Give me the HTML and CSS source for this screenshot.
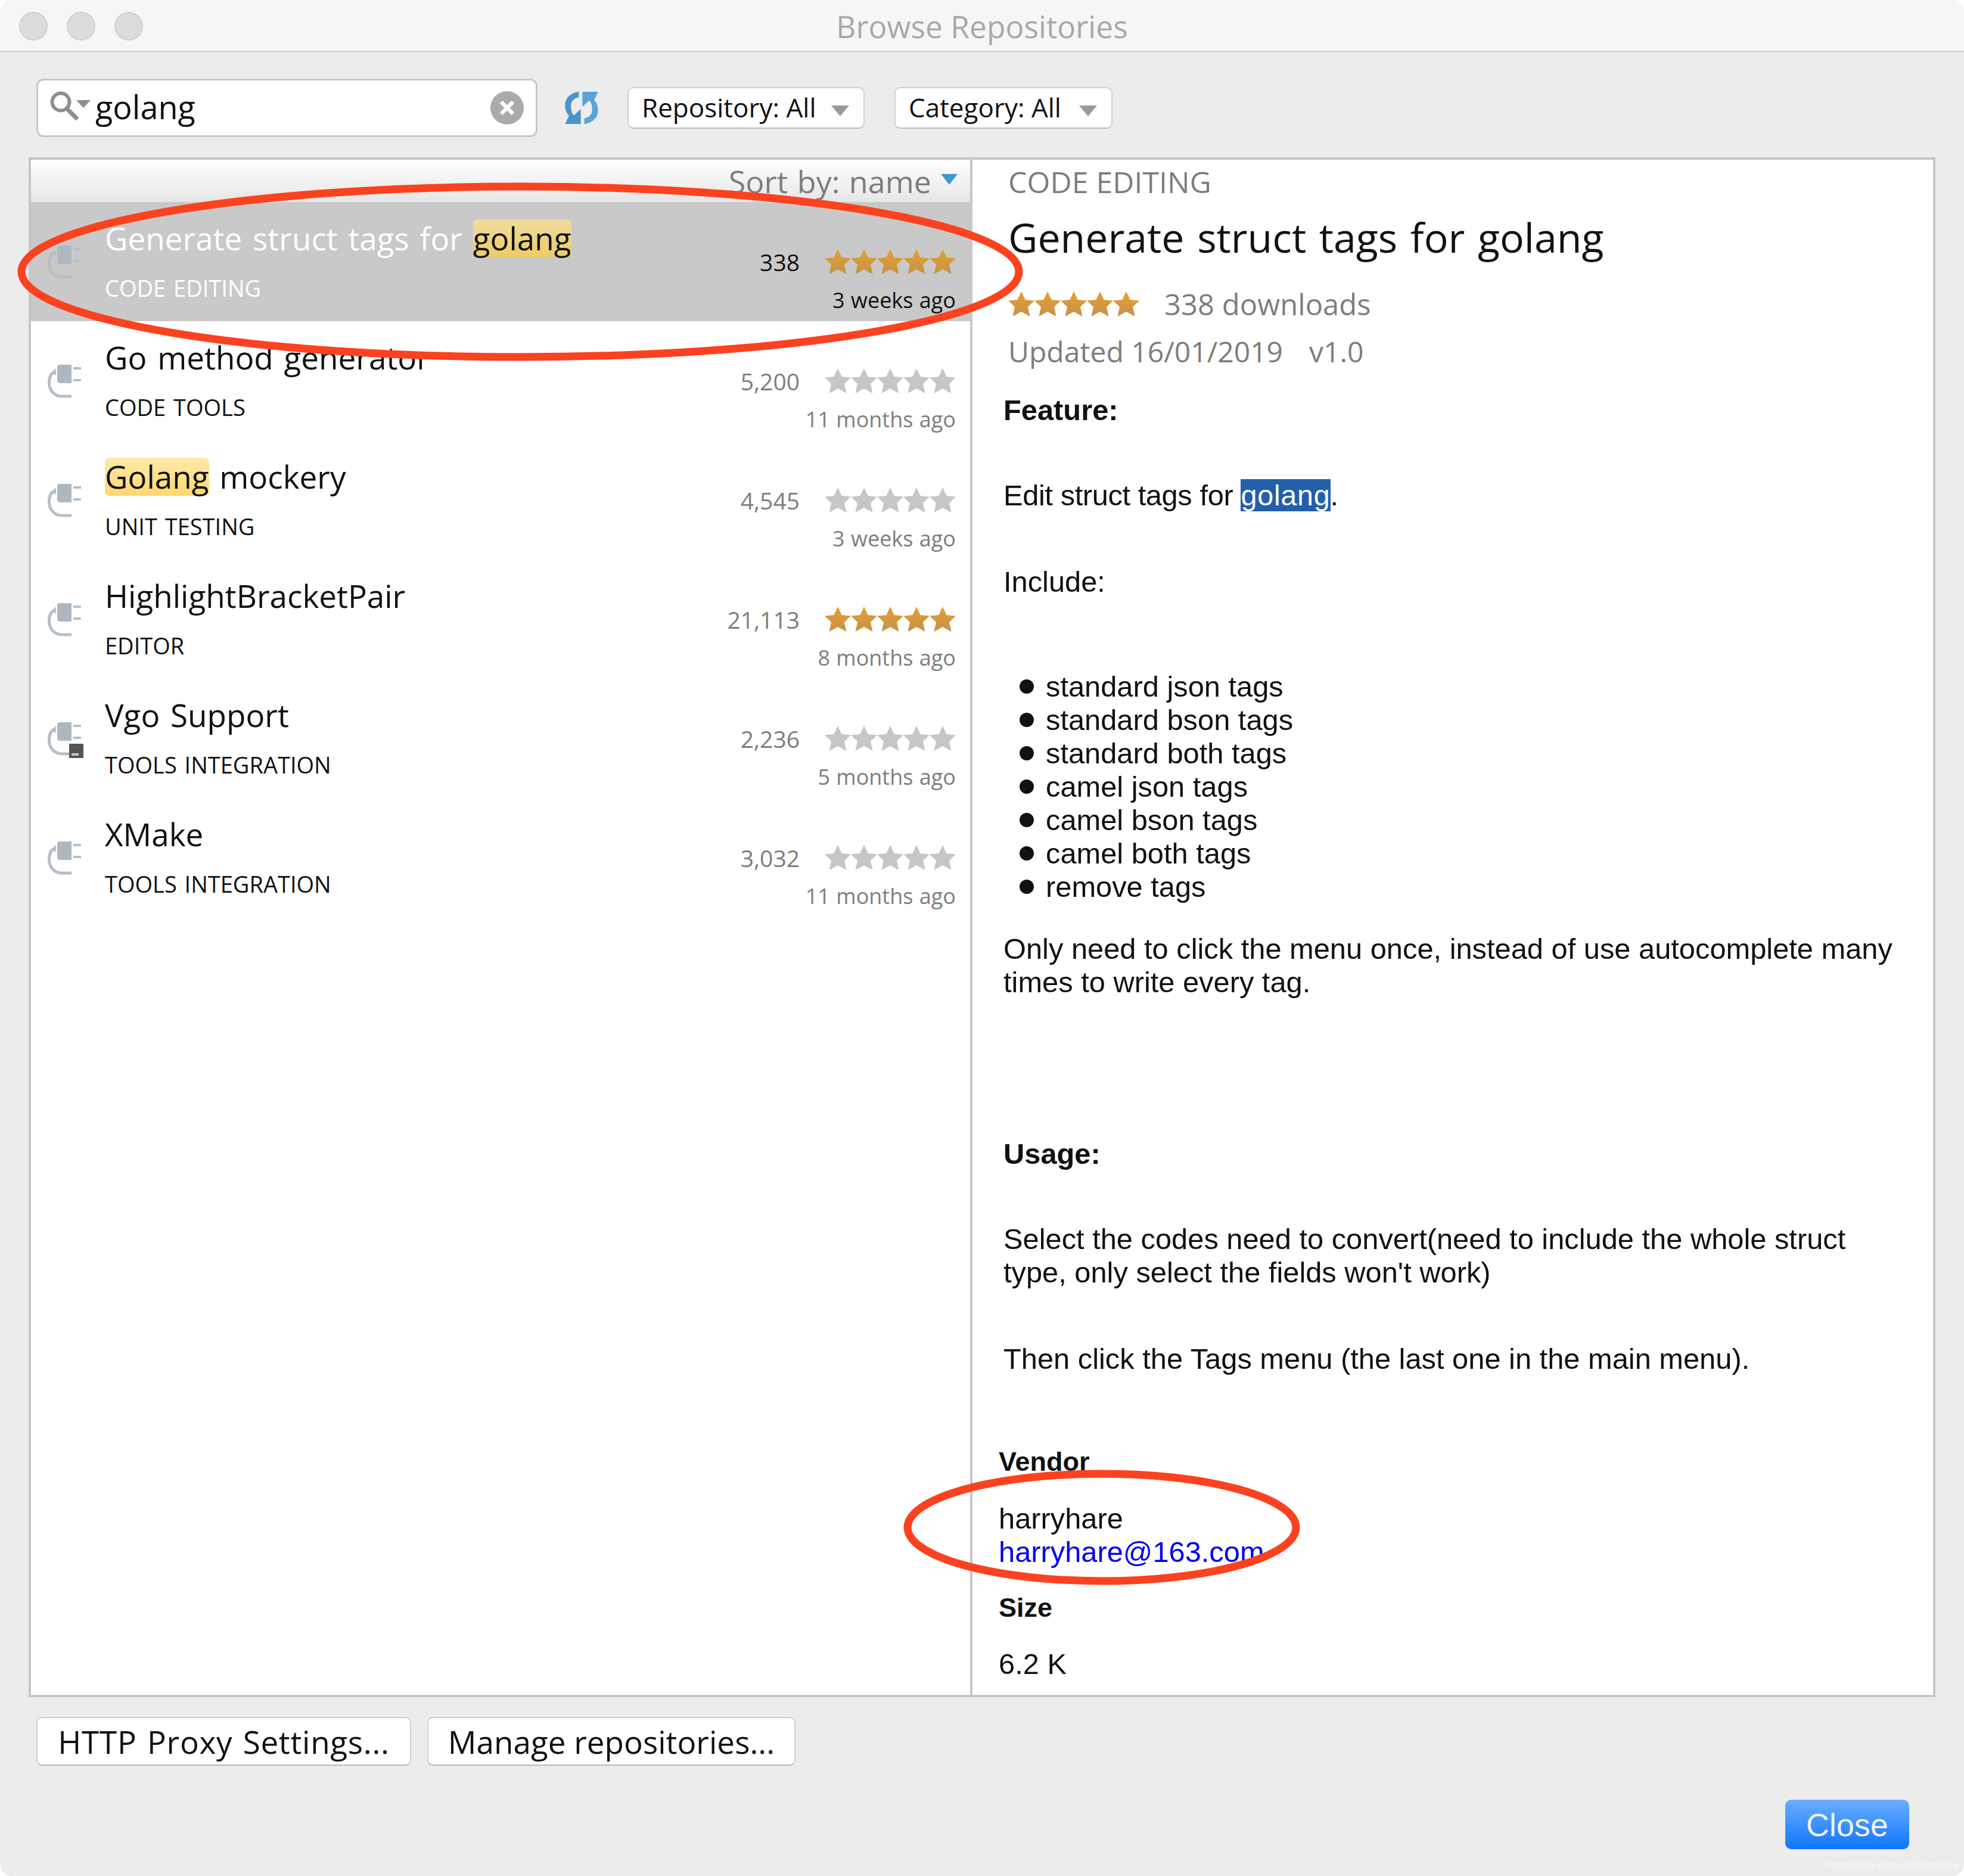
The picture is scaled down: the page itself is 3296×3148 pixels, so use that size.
FILE: index.html
```html
<!DOCTYPE html>
<html>
<head>
  <meta charset="UTF-8">
  <title>Browse Repositories</title>
  <link rel="stylesheet" href="styles.css">
</head>
<body>

  <svg width="0" height="0" class="defs">
    <defs>
      <linearGradient id="ouro" x1="0" y1="0" x2="0" y2="1">
        <stop offset="0" stop-color="#e6a030"/>
        <stop offset="1" stop-color="#c6924a"/>
      </linearGradient>
      <symbol id="estrela" viewBox="0 0 44 44">
        <path d="M22 1 L28.500 15 L44 16.500 L33 27 L36.500 43 L22 35 L7.500 43 L11 27 L0 16.500 L15.500 15 Z"/>
      </symbol>
      <symbol id="plug" viewBox="0 0 60 60">
        <path d="M20 0 H40 V31 H21 Q16 31 16 26 V5 Q16 0 20 0 Z" fill="#adb8c2"/>
        <rect x="43" y="4" width="13" height="4" fill="#b6bfc8"/>
        <rect x="43" y="24" width="13" height="4" fill="#b6bfc8"/>
        <path d="M12 12 C5 14 2.500 20 2.500 30 C2.500 44 12 53 24 53 H40" fill="none" stroke="#b6bfc8" stroke-width="5"/>
        <path d="M14 6 V18 L6 13 Z" fill="#b6bfc8"/>
      </symbol>
    </defs>
  </svg>

  <div class="janela">

    <div class="titulo">
      <div class="semaforo"><span></span><span></span><span></span></div>
      <div class="titulo-texto">Browse Repositories</div>
    </div>

    <div class="barra">
      <div class="busca">
        <svg class="lupa" viewBox="0 0 76 54">
          <circle cx="22" cy="21" r="14.500" fill="none" stroke="#8e8e8e" stroke-width="6"/>
          <path d="M32 32 L50 50" stroke="#8e8e8e" stroke-width="7"/>
          <path d="M48 18 H72 L60 31 Z" fill="#8e8e8e"/>
        </svg>
        <span class="busca-texto">golang</span>
        <svg class="limpar" viewBox="0 0 56 56">
          <circle cx="28" cy="28" r="28" fill="#aaaaaa"/>
          <path d="M18 18 L38 38 M38 18 L18 38" stroke="#fff" stroke-width="6.500"/>
        </svg>
      </div>
      <svg class="atualizar" viewBox="0 0 168 170">
        <path d="M70 2 C25 10 0 35 0 72 C0 95 8 112 20 125 L0 167 H80 V90 L45 123 C33 110 30 95 30 75 C30 52 45 35 70 32 Z" fill="#4a94cb"/>
        <path d="M98 168 C143 160 168 135 168 98 C168 75 160 58 148 45 L168 3 H88 V80 L123 47 C135 60 138 75 138 95 C138 118 123 135 98 138 Z" fill="#5aa3d6"/>
      </svg>
      <div class="combo combo-repo">Repository: All<i class="seta"></i></div>
      <div class="combo combo-cat">Category: All<i class="seta"></i></div>
    </div>

    <div class="painel">
      <div class="lista">
        <div class="ordem">Sort by: name<i class="seta-azul"></i></div>

        <div class="item selecionado">
          <svg class="plug"><use href="#plug"/></svg>
          <div class="item-texto">
            <div class="item-nome">Generate struct tags for <span class="marca">golang</span></div>
            <div class="item-cat">CODE EDITING</div>
          </div>
          <div class="item-info">
            <div class="linha-nota">
              <span class="qtd">338</span>
              <div class="estrelas ouro"><svg><use href="#estrela"/></svg><svg><use href="#estrela"/></svg><svg><use href="#estrela"/></svg><svg><use href="#estrela"/></svg><svg><use href="#estrela"/></svg></div>
            </div>
            <div class="data">3 weeks ago</div>
          </div>
        </div>

        <div class="item">
          <svg class="plug"><use href="#plug"/></svg>
          <div class="item-texto">
            <div class="item-nome">Go method generator</div>
            <div class="item-cat">CODE TOOLS</div>
          </div>
          <div class="item-info">
            <div class="linha-nota">
              <span class="qtd">5,200</span>
              <div class="estrelas"><svg><use href="#estrela"/></svg><svg><use href="#estrela"/></svg><svg><use href="#estrela"/></svg><svg><use href="#estrela"/></svg><svg><use href="#estrela"/></svg></div>
            </div>
            <div class="data">11 months ago</div>
          </div>
        </div>

        <div class="item">
          <svg class="plug"><use href="#plug"/></svg>
          <div class="item-texto">
            <div class="item-nome"><span class="marca">Golang</span> mockery</div>
            <div class="item-cat">UNIT TESTING</div>
          </div>
          <div class="item-info">
            <div class="linha-nota">
              <span class="qtd">4,545</span>
              <div class="estrelas"><svg><use href="#estrela"/></svg><svg><use href="#estrela"/></svg><svg><use href="#estrela"/></svg><svg><use href="#estrela"/></svg><svg><use href="#estrela"/></svg></div>
            </div>
            <div class="data">3 weeks ago</div>
          </div>
        </div>

        <div class="item">
          <svg class="plug"><use href="#plug"/></svg>
          <div class="item-texto">
            <div class="item-nome">HighlightBracketPair</div>
            <div class="item-cat">EDITOR</div>
          </div>
          <div class="item-info">
            <div class="linha-nota">
              <span class="qtd">21,113</span>
              <div class="estrelas ouro"><svg><use href="#estrela"/></svg><svg><use href="#estrela"/></svg><svg><use href="#estrela"/></svg><svg><use href="#estrela"/></svg><svg><use href="#estrela"/></svg></div>
            </div>
            <div class="data">8 months ago</div>
          </div>
        </div>

        <div class="item">
          <div class="plug-caixa">
            <svg class="plug"><use href="#plug"/></svg>
            <span class="emblema"></span>
          </div>
          <div class="item-texto">
            <div class="item-nome">Vgo Support</div>
            <div class="item-cat">TOOLS INTEGRATION</div>
          </div>
          <div class="item-info">
            <div class="linha-nota">
              <span class="qtd">2,236</span>
              <div class="estrelas"><svg><use href="#estrela"/></svg><svg><use href="#estrela"/></svg><svg><use href="#estrela"/></svg><svg><use href="#estrela"/></svg><svg><use href="#estrela"/></svg></div>
            </div>
            <div class="data">5 months ago</div>
          </div>
        </div>

        <div class="item">
          <svg class="plug"><use href="#plug"/></svg>
          <div class="item-texto">
            <div class="item-nome">XMake</div>
            <div class="item-cat">TOOLS INTEGRATION</div>
          </div>
          <div class="item-info">
            <div class="linha-nota">
              <span class="qtd">3,032</span>
              <div class="estrelas"><svg><use href="#estrela"/></svg><svg><use href="#estrela"/></svg><svg><use href="#estrela"/></svg><svg><use href="#estrela"/></svg><svg><use href="#estrela"/></svg></div>
            </div>
            <div class="data">11 months ago</div>
          </div>
        </div>
      </div>

      <div class="detalhe">
        <div class="cabecalho">
          <div class="det-cat">CODE EDITING</div>
          <h1 class="det-nome">Generate struct tags for golang</h1>
          <div class="det-nota">
            <div class="estrelas ouro"><svg><use href="#estrela"/></svg><svg><use href="#estrela"/></svg><svg><use href="#estrela"/></svg><svg><use href="#estrela"/></svg><svg><use href="#estrela"/></svg></div>
            <span>338 downloads</span>
          </div>
          <div class="det-versao"><span>Updated 16/01/2019</span><span>v1.0</span></div>
        </div>

        <div class="corpo">
          <p class="forte p-feature">Feature:</p>
          <p class="p-edit">Edit struct tags for <span class="sel">golang</span>.</p>
          <p class="p-include">Include:</p>
          <ul>
            <li>standard json tags</li>
            <li>standard bson tags</li>
            <li>standard both tags</li>
            <li>camel json tags</li>
            <li>camel bson tags</li>
            <li>camel both tags</li>
            <li>remove tags</li>
          </ul>
          <p class="p-only">Only need to click the menu once, instead of use autocomplete many times to write every tag.</p>
          <p class="forte p-usage">Usage:</p>
          <p class="p-select">Select the codes need to convert(need to include the whole struct type, only select the fields won't work)</p>
          <p class="p-then">Then click the Tags menu (the last one in the main menu).</p>
        </div>

        <div class="vendedor">
          <p class="forte">Vendor</p>
          <p class="p-harry">harryhare<br><a href="#">harryhare@163.com</a></p>
          <p class="forte p-size">Size</p>
          <p class="p-k">6.2 K</p>
        </div>
      </div>
    </div>

    <div class="rodape">
      <div class="botoes">
        <button class="botao botao-http">HTTP Proxy Settings...</button>
        <button class="botao botao-manage">Manage repositories...</button>
      </div>
      <div class="fechar-linha"><button class="fechar">Close</button></div>
    </div>

    <div class="marca-agua">https://blog.csdn.net/harryhare</div>
  </div>

  <!-- circulos vermelhos por cima da janela -->
  <svg class="anotacao" viewBox="0 0 3296 3148">
    <ellipse cx="873" cy="456" rx="837" ry="143"/>
    <ellipse cx="1849" cy="2563" rx="326" ry="90"/>
  </svg>

</body>
</html>
```

FILE: styles.css
```css
* {
  box-sizing: border-box;
}

html, body {
  margin: 0;
  background-color: #ffffff;
}

body {
  width: 3296px;
  height: 3148px;
  position: relative;
  overflow: hidden;
  font-family: "Liberation Sans", Arial, sans-serif;
  color: #1a1a1a;
}

.defs {
  position: absolute;
}

.janela {
  width: 3296px;
  height: 3148px;
  background-color: #ececec;
  border-radius: 20px;
  overflow: hidden;
  position: relative;
}

/* barra de titulo */
.titulo {
  height: 88px;
  padding-top: 3px;
  background-color: #f6f6f6;
  border-bottom: 3px solid #d4d4d4;
  display: flex;
  align-items: center;
  position: relative;
}

.semaforo {
  display: flex;
  gap: 32px;
  padding-left: 32px;
}

.semaforo span {
  width: 48px;
  height: 48px;
  border-radius: 50%;
  background-color: #dcdcdc;
  border: 2px solid #d0d0d0;
}

.titulo-texto {
  position: absolute;
  left: 0;
  right: 0;
  text-align: center;
  font-family: "Open Sans", sans-serif;
  font-size: 51.500px;
  color: #a8a8a8;
}

/* busca e combos */
.barra {
  height: 176px;
  padding: 10px 0 0 61px;
  display: flex;
  align-items: center;
}

.busca {
  width: 841px;
  height: 98px;
  background-color: #ffffff;
  border: 3px solid #c8c8c8;
  border-radius: 12px;
  display: flex;
  align-items: center;
  padding: 0 20px 0 16px;
}

.lupa {
  width: 76px;
  height: 54px;
  margin-top: -8px;
  flex: none;
}

.busca-texto {
  font-family: "Open Sans", sans-serif;
  font-size: 54px;
  color: #111111;
  margin: -4px 0 0 4px;
  flex: 1;
}

.limpar {
  width: 56px;
  height: 56px;
}

.atualizar {
  width: 56px;
  height: 56px;
  margin-left: 46px;
  flex: none;
}

.combo {
  height: 70px;
  background-color: #ffffff;
  border: 2px solid #cfcfcf;
  border-bottom-color: #bdbdbd;
  border-radius: 10px;
  font-family: "Open Sans", sans-serif;
  font-size: 44px;
  color: #111111;
  display: flex;
  align-items: center;
  padding: 0 0 3px 22px;
  position: relative;
}

.combo-repo {
  width: 398px;
  margin-left: 49px;
}

.combo-cat {
  width: 366px;
  margin-left: 50px;
}

.seta {
  position: absolute;
  right: 24px;
  top: 29px;
  border-left: 15px solid transparent;
  border-right: 15px solid transparent;
  border-top: 18px solid #9a9a9a;
}

/* painel principal */
.painel {
  margin-left: 48px;
  width: 3200px;
  height: 2584px;
  background-color: #ffffff;
  border: 4px solid #c6c6c6;
  display: flex;
}

.lista {
  width: 1580px;
  border-right: 4px solid #c6c6c6;
  flex: none;
}

.ordem {
  height: 71px;
  background: linear-gradient(#ffffff, #e6e6e6);
  display: flex;
  justify-content: flex-end;
  align-items: center;
  padding-right: 21px;
  font-family: "Open Sans", sans-serif;
  font-size: 52px;
  word-spacing: 2px;
  color: #7d7d7d;
}

.seta-azul {
  margin-left: 16px;
  margin-top: -6px;
  border-left: 14px solid transparent;
  border-right: 14px solid transparent;
  border-top: 18px solid #3d9ad1;
}

.item {
  height: 200px;
  display: flex;
  align-items: flex-start;
  position: relative;
}

.selecionado {
  background-color: #c9c9c9;
  margin-right: -4px;
  padding-right: 4px;
}

.plug,
.plug-caixa {
  width: 60px;
  height: 60px;
  margin: 73px 0 0 28px;
  flex: none;
}

.plug-caixa {
  position: relative;
}

.plug-caixa .plug {
  margin: 0;
  display: block;
}

.emblema {
  position: absolute;
  left: 36px;
  top: 36px;
  width: 24px;
  height: 24px;
  background-color: #555555;
}

.emblema::after {
  content: "";
  position: absolute;
  left: 4px;
  bottom: 4px;
  width: 12px;
  height: 4px;
  background-color: #c8c8c8;
}

.item-texto {
  margin-left: 36px;
  padding-top: 25px;
  flex: 1;
}

.item-nome {
  font-family: "Open Sans", sans-serif;
  font-size: 53px;
  word-spacing: 4px;
  line-height: 72px;
  color: #111111;
}

.selecionado .item-nome,
.selecionado .item-cat {
  color: #ffffff;
}

.marca {
  display: inline-block;
  line-height: 64px;
  background: linear-gradient(#ffe9ab, #ffd76e);
  border-radius: 8px;
  color: #111111;
}

.selecionado .marca {
  background: linear-gradient(#f0dc9e, #eccb66);
}

.item-cat {
  font-family: "Open Sans", sans-serif;
  font-size: 38px;
  word-spacing: 3px;
  line-height: 50px;
  margin-top: 22px;
  color: #111111;
}

.item-info {
  width: 400px;
  padding-right: 24px;
  text-align: right;
}

.linha-nota {
  display: flex;
  justify-content: flex-end;
  align-items: center;
  margin-top: 78px;
  height: 44px;
}

.qtd {
  font-family: "Open Sans", sans-serif;
  font-size: 39px;
  color: #7d7d7d;
  margin-right: 42px;
}

.selecionado .qtd {
  color: #111111;
}

.estrelas {
  display: flex;
  gap: 0;
}

.estrelas svg {
  width: 44px;
  height: 44px;
  fill: #c6c6c6;
}

.estrelas.ouro svg {
  fill: url(#ouro);
}

.data {
  font-family: "Open Sans", sans-serif;
  font-size: 36px;
  word-spacing: 1px;
  line-height: 50px;
  margin-top: 18px;
  color: #7d7d7d;
  white-space: nowrap;
}

.selecionado .data {
  color: #111111;
}

/* detalhe */
.detalhe {
  flex: 1;
  min-width: 0;
}

.cabecalho {
  padding-left: 60px;
}

.det-cat {
  font-family: "Open Sans", sans-serif;
  font-size: 50px;
  line-height: 60px;
  margin-top: 7px;
  color: #7d7d7d;
}

.det-nome {
  font-family: "Open Sans", sans-serif;
  font-weight: normal;
  font-size: 68px;
  word-spacing: 4px;
  line-height: 80px;
  margin: 23px 0 0;
  color: #111111;
}

.det-nota {
  display: flex;
  align-items: center;
  gap: 42px;
  margin-top: 39px;
  font-family: "Open Sans", sans-serif;
  font-size: 49px;
  color: #7d7d7d;
}

.det-versao {
  display: flex;
  gap: 44px;
  margin-top: 14px;
  font-family: "Open Sans", sans-serif;
  font-size: 48px;
  color: #7d7d7d;
}

.corpo {
  padding-left: 52px;
  width: 1552px;
  font-size: 48.800px;
  line-height: 56px;
  color: #111111;
}

p {
  margin: 0;
}

.forte {
  font-weight: bold;
}

.p-feature {
  margin-top: 38px;
}

.p-edit {
  margin-top: 87px;
  letter-spacing: -0.400px;
}

.p-include {
  margin-top: 89px;
}

.corpo ul {
  margin: 120px 0 0;
  padding-left: 27px;
  list-style: none;
}

.corpo li {
  display: flex;
  align-items: center;
  gap: 20px;
}

.corpo li::before {
  content: "";
  width: 24px;
  height: 24px;
  border-radius: 50%;
  background-color: #111111;
}

.p-only {
  margin-top: 48px;
}

.p-usage {
  margin-top: 232px;
}

.p-select {
  margin-top: 87px;
}

.p-then {
  margin-top: 89px;
}

.sel {
  background-color: #2360ab;
  color: #ffffff;
  letter-spacing: 0.600px;
}

.vendedor {
  padding-left: 44px;
  margin-top: 117px;
  font-size: 48.800px;
  line-height: 56px;
  color: #111111;
}

.vendedor .forte {
  font-size: 45px;
}

.p-harry {
  margin-top: 39px;
}

.vendedor a {
  color: #0000ee;
  text-decoration: none;
}

.vendedor .p-size {
  margin-top: 38px;
}

.p-k {
  margin-top: 38px;
}

/* rodape */
.rodape {
  position: relative;
}

.botoes {
  display: flex;
  gap: 27px;
  padding: 33px 0 0 61px;
}

.botao {
  height: 82px;
  background-color: #ffffff;
  border: 2px solid #cfcfcf;
  border-bottom-color: #b8b8b8;
  border-radius: 10px;
  font-family: "Open Sans", sans-serif;
  font-size: 53px;
  color: #111111;
  padding: 0;
}

.botao-http {
  width: 629px;
  letter-spacing: 0.700px;
  word-spacing: 3px;
}

.botao-manage {
  width: 618px;
}

.fechar-linha {
  display: flex;
  justify-content: flex-end;
  padding: 57px 92px 0 0;
}

.fechar {
  width: 208px;
  height: 83px;
  border: none;
  border-radius: 10px;
  background: linear-gradient(#69aeff, #0f75ff);
  color: #f2f2f2;
  font-family: "Liberation Sans", sans-serif;
  font-size: 54px;
  padding: 0;
}

.marca-agua {
  position: absolute;
  right: 10px;
  bottom: 9px;
  font-size: 16.200px;
  color: #f7f7f7;
}

/* anotacao vermelha */
.anotacao {
  position: absolute;
  left: 0;
  top: 0;
  width: 3296px;
  height: 3148px;
  pointer-events: none;
}

.anotacao ellipse {
  fill: none;
  stroke: #fb4220;
  stroke-width: 13;
}
```
